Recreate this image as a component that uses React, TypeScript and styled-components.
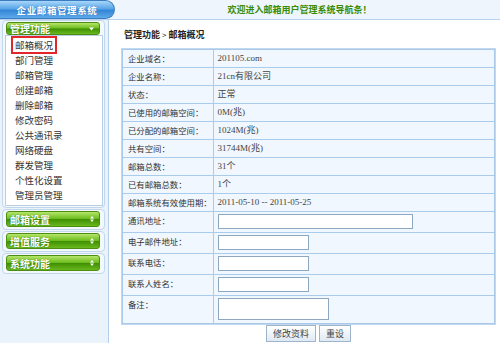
import React from 'react';
import styled, { createGlobalStyle } from 'styled-components';

const Global = createGlobalStyle`
  html, body { margin: 0; padding: 0; background: #fff; }
  body {
    font-family: "Noto Sans CJK SC", "Liberation Sans", sans-serif;
    font-size: 9px;
    color: #333;
  }
`;

const Page = styled.div`
  width: 500px;
  height: 343px;
  display: flex;
  flex-direction: column;
  overflow: hidden;
`;

const Header = styled.header`
  height: 19px;
  flex: none;
  display: flex;
  background: #eef5fc;
  border-bottom: 1px solid #b9d3ee;
`;

const Brand = styled.div`
  width: 115px;
  height: 19px;
  box-sizing: border-box;
  border: 1px solid #3b7cc0;
  border-left: none;
  border-radius: 0 10px 10px 0;
  background: linear-gradient(#a7d6fa, #5aa6e8 45%, #3486d6 55%, #5eaaea);
  color: #fff;
  font-weight: bold;
  font-size: 9.5px;
  letter-spacing: 0.6px;
  display: flex;
  align-items: center;
  justify-content: center;
  text-shadow: 0 0 1px #2a6fb5;
`;

const Welcome = styled.div`
  flex: 1;
  display: flex;
  align-items: center;
  justify-content: center;
  padding-right: 16px;
  color: #3a8c00;
  font-weight: bold;
  font-size: 9px;
`;

const Body = styled.div`
  flex: 1;
  display: flex;
  min-height: 0;
`;

const Sidebar = styled.aside`
  width: 109px;
  flex: none;
  box-sizing: border-box;
  background: #eaf2fb;
  border-right: 1px solid #b5cfe9;
  padding: 0 3px 0 2px;
  display: flex;
  flex-direction: column;
  gap: 1px;
`;

const Group = styled.div`
  border: 1px solid #c2d7ec;
  border-radius: 4px;
  padding: 1px 2px 2px;
  background: #f3f8fd;
  display: flex;
  flex-direction: column;
`;

const GreenBar = styled.div<{ $h: number }>`
  height: ${p => p.$h}px;
  box-sizing: border-box;
  margin: 0 2px 0 1px;
  border: 1px solid #4d8d12;
  border-radius: 3px;
  background: linear-gradient(#b5e66c, #6cbc1c 48%, #3f8f02 52%, #69b81e);
  color: #fff;
  font-weight: bold;
  font-size: 10px;
  padding: 0 5px 0 3px;
  display: flex;
  align-items: center;
  justify-content: space-between;
  text-shadow: 0 0 1px #2f6a00;
`;

const ItemList = styled.ul`
  list-style: none;
  margin: 0 -1px -1px 0;
  padding: 2px 0 2px 9px;
  background: #fff;
  border: 1px solid #b8cfe6;
`;

const Item = styled.li`
  height: 15px;
  line-height: 15px;
  font-size: 9.5px;
  color: #333;
`;

const Selected = styled.span`
  display: inline-block;
  line-height: 12px;
  padding: 0 1px;
  outline: 2px solid #e2262b;
  outline-offset: 1px;
  margin-left: -1px;
`;

const Main = styled.main`
  flex: 1;
  padding: 9px 3px 0 12px;
  display: flex;
  flex-direction: column;
  align-items: flex-start;
`;

const Title = styled.h2`
  margin: 0 0 7px 3px;
  font-size: 9px;
  line-height: 12px;
  font-weight: bold;
  color: #222;
  span { font-weight: normal; font-size: 8px; margin: 0 2px; }
`;

const Table = styled.table`
  width: 375px;
  table-layout: fixed;
  border-collapse: collapse;
  border: 2px solid #c2d8ee;
  outline: 1px solid #a9c9ea;
  outline-offset: -2px;
`;

const LabelCol = styled.col`
  width: 91px;
`;

const Label = styled.td`
  padding: 2px 0 3px 5px;
  line-height: 12px;
  vertical-align: top;
  background: #f0f7fe;
  border: 1px solid #a9cbec;
  color: #333;
  font-size: 8.4px;
  white-space: nowrap;
`;

const Value = styled.td`
  padding: 2px 5px 3px 4px;
  line-height: 12px;
  vertical-align: top;
  background: #f0f7fe;
  border: 1px solid #a9cbec;
  font-family: "Liberation Serif", "Noto Sans CJK SC", serif;
  font-size: 9px;
  color: #444;
`;

const Text = styled.div`
  height: 12px;
  line-height: 12px;
  white-space: nowrap;
`;

const Field = styled.input<{ $w: number }>`
  display: block;
  width: ${p => p.$w}px;
  height: 15px;
  box-sizing: border-box;
  margin: 0;
  border: 1px solid #8fa8c2;
  background: #fff;
  padding: 0 2px;
  font-size: 9px;
`;

const Memo = styled.textarea`
  display: block;
  width: 111px;
  height: 22px;
  box-sizing: border-box;
  margin: 0;
  border: 1px solid #8fa8c2;
  background: #fff;
  resize: none;
  overflow-y: scroll;
  font-size: 9px;
  padding: 0;
`;

const Actions = styled.div`
  width: 375px;
  margin-top: 0;
  display: flex;
  justify-content: center;
  gap: 3px;
`;

const Button = styled.button`
  height: 17px;
  padding: 0 6px;
  border: 1px solid #9db4cb;
  background: linear-gradient(#ffffff, #dfe9f4);
  font-family: "Noto Sans CJK SC", sans-serif;
  font-size: 9px;
  color: #444;
  line-height: 15px;
`;

const Arrow = ({ open }: { open?: boolean }) =>
  open ? (
    <svg width="5" height="4" viewBox="0 0 5 4"><path d="M0 0.5h5L2.5 3.5z" fill="#fff" /></svg>
  ) : (
    <svg width="4" height="6" viewBox="0 0 4 6"><path d="M0 2.5L2 0l2 2.5zM0 3.5h4L2 6z" fill="#fff" /></svg>
  );

const menu = ['部门管理', '邮箱管理', '创建邮箱', '删除邮箱', '修改密码', '公共通讯录', '网络硬盘', '群发管理', '个性化设置', '管理员管理'];

const info: [string, string][] = [
  ['企业域名：', '201105.com'],
  ['企业名称：', '21cn有限公司'],
  ['状态：', '正常'],
  ['已使用的邮箱空间：', '0M(兆)'],
  ['已分配的邮箱空间：', '1024M(兆)'],
  ['共有空间：', '31744M(兆)'],
  ['邮箱总数：', '31个'],
  ['已有邮箱总数：', '1个'],
  ['邮箱系统有效使用期：', '2011-05-10 -- 2011-05-25'],
];

export default function App() {
  return (
    <Page>
      <Global />
      <Header>
        <Brand>企业邮箱管理系统</Brand>
        <Welcome>欢迎进入邮箱用户管理系统导航条！</Welcome>
      </Header>
      <Body>
        <Sidebar>
          <Group>
            <GreenBar $h={13}>管理功能<Arrow open /></GreenBar>
            <ItemList>
              <Item><Selected>邮箱概况</Selected></Item>
              {menu.map(m => <Item key={m}>{m}</Item>)}
            </ItemList>
          </Group>
          <Group><GreenBar $h={16}>邮箱设置<Arrow /></GreenBar></Group>
          <Group><GreenBar $h={16}>增值服务<Arrow /></GreenBar></Group>
          <Group><GreenBar $h={16}>系统功能<Arrow /></GreenBar></Group>
        </Sidebar>
        <Main>
          <Title>管理功能<span>&gt;</span>邮箱概况</Title>
          <Table>
            <colgroup><LabelCol /><col /></colgroup>
            <tbody>
              {info.map(([k, v]) => (
                <tr key={k}><Label><Text>{k}</Text></Label><Value><Text>{v}</Text></Value></tr>
              ))}
              <tr><Label><Text>通讯地址：</Text></Label><Value><Field $w={195} /></Value></tr>
              <tr><Label><Text>电子邮件地址：</Text></Label><Value><Field $w={91} /></Value></tr>
              <tr><Label><Text>联系电话：</Text></Label><Value><Field $w={91} /></Value></tr>
              <tr><Label><Text>联系人姓名：</Text></Label><Value><Field $w={91} /></Value></tr>
              <tr><Label><Text>备注：</Text></Label><Value><Memo /></Value></tr>
            </tbody>
          </Table>
          <Actions>
            <Button>修改资料</Button>
            <Button>重设</Button>
          </Actions>
        </Main>
      </Body>
    </Page>
  );
}
